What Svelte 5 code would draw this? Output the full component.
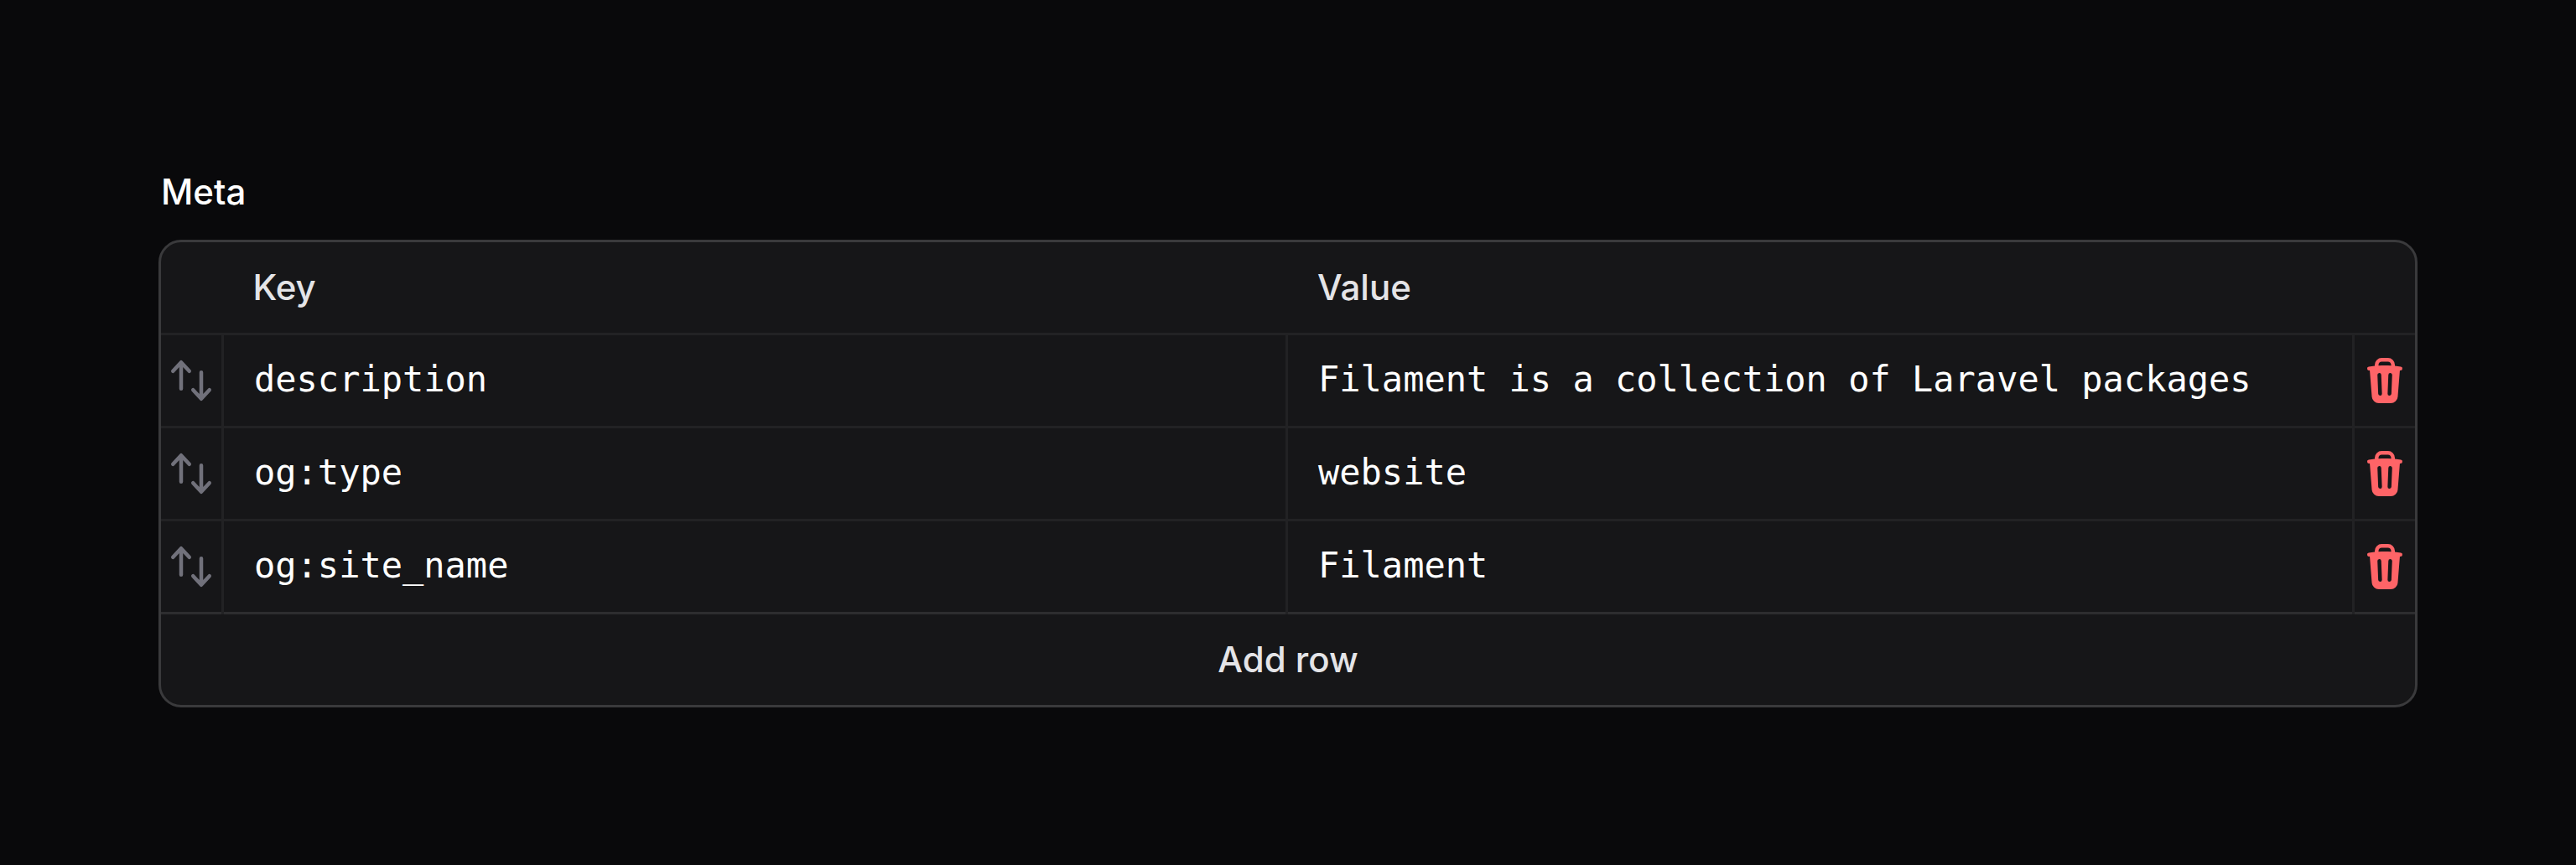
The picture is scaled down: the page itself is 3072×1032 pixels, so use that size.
<script>
  const rows = [
    { key: 'description', value: 'Filament is a collection of Laravel packages' },
    { key: 'og:type', value: 'website' },
    { key: 'og:site_name', value: 'Filament' },
  ];
</script>

<main class="page">
  <div class="label">Meta</div>
  <div class="card">
    <div class="row head">
      <span></span>
      <span class="heading">Key</span>
      <span class="heading second">Value</span>
      <span></span>
    </div>
    {#each rows as row}
      <div class="row item">
        <button class="action sort" aria-label="Reorder">
          <svg viewBox="0 0 20 20" fill="currentColor">
            <path fill-rule="evenodd" d="M2.24 6.8a.75.75 0 0 0 1.06-.04l1.95-2.1v8.59a.75.75 0 0 0 1.5 0V4.66l1.95 2.1a.75.75 0 1 0 1.1-1.02l-3.25-3.5a.75.75 0 0 0-1.1 0L2.2 5.74a.75.75 0 0 0 .04 1.06Zm8 6.4a.75.75 0 0 0-.04 1.06l3.25 3.5a.75.75 0 0 0 1.1 0l3.25-3.5a.75.75 0 1 0-1.1-1.02l-1.95 2.1V6.75a.75.75 0 0 0-1.5 0v8.59l-1.95-2.1a.75.75 0 0 0-1.06-.04Z" />
          </svg>
        </button>
        <div class="field">{row.key}</div>
        <div class="field">{row.value}</div>
        <button class="action delete" aria-label="Delete">
          <svg viewBox="0 0 20 20" fill="currentColor">
            <path fill-rule="evenodd" d="M8.75 1A2.75 2.75 0 0 0 6 3.75v.443c-.795.077-1.584.176-2.365.298a.75.75 0 1 0 .23 1.482l.149-.022.841 10.518A2.75 2.75 0 0 0 7.596 19h4.807a2.75 2.75 0 0 0 2.742-2.53l.841-10.519.149.023a.75.75 0 0 0 .23-1.482A41.03 41.03 0 0 0 14 4.193V3.75A2.75 2.75 0 0 0 11.25 1h-2.5ZM10 4c.84 0 1.673.025 2.5.075V3.75c0-.69-.56-1.25-1.25-1.25h-2.5c-.69 0-1.25.56-1.25 1.25v.325C8.327 4.025 9.16 4 10 4ZM8.58 7.72a.75.75 0 0 0-1.5.06l.3 7.5a.75.75 0 1 0 1.5-.06l-.3-7.5Zm4.34.06a.75.75 0 1 0-1.5-.06l-.3 7.5a.75.75 0 1 0 1.5.06l.3-7.5Z" />
          </svg>
        </button>
      </div>
    {/each}
    <button class="add">Add row</button>
  </div>
</main>

<style>
  :global(body) {
    background: #09090b;
  }

  .page {
    box-sizing: border-box;
    height: 1032px;
    padding: 193px 189px 0;
    font: 500 42px/72px Inter, sans-serif;
    color: #fff;
  }

  .label {
    padding-left: 3px;
    margin-bottom: 21px;
  }

  .card {
    border: 3px solid #3a3a3c;
    border-radius: 27px;
    background: #161618;
    overflow: hidden;
  }

  .row {
    display: grid;
    grid-template-columns: 72px 1269px 1fr 75px;
    height: 111px;
    box-sizing: border-box;
    border-bottom: 3px solid #222224;
  }

  .item:nth-last-child(2) {
    border-bottom-color: #2d2d2f;
  }

  .heading {
    padding-left: 37.5px;
    line-height: 108px;
    color: #e4e4e7;
  }

  .second {
    padding-left: 38px;
  }

  .field {
    border-left: 3px solid #222224;
    padding-left: 36px;
    font: 400 42px/106px "DejaVu Sans Mono", monospace;
    white-space: pre;
  }

  /* column rules run through the border above the footer */
  .item:nth-last-child(2) .field,
  .item:nth-last-child(2) .delete {
    margin-bottom: -3px;
  }

  button {
    appearance: none;
    margin: 0;
    padding: 0;
    border: 0;
    background: none;
    font: inherit;
  }

  .action {
    display: flex;
    align-items: flex-start;
    justify-content: center;
    padding-top: 23.5px;
  }

  .action svg {
    width: 60px;
    height: 60px;
  }

  .sort {
    color: #71717b;
  }

  .delete {
    border-left: 3px solid #222224;
    color: #ff6467;
  }

  .add {
    display: block;
    width: 100%;
    height: 108px;
    line-height: 108px;
    text-align: center;
    color: #e4e4e7;
  }
</style>
